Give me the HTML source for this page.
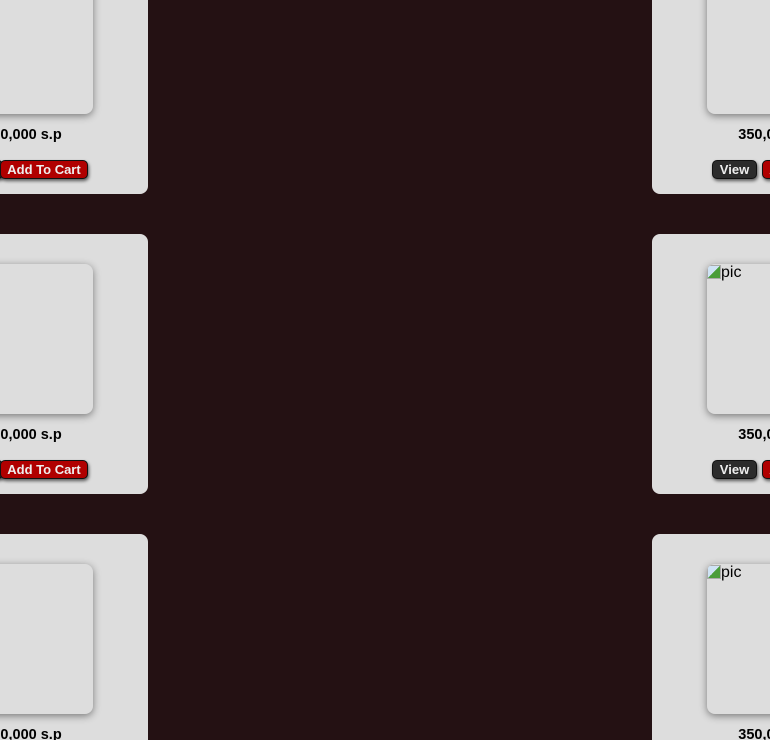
<!DOCTYPE html>
<html><head><style>
html,body{margin:0;padding:0;width:770px;height:740px;overflow:hidden;background:#241113;font-family:"Liberation Sans",Arial,sans-serif;}
#wrap{position:relative;width:770px;height:740px;overflow:hidden;}
.card{position:absolute;width:250px;height:260px;background:#dddddd;border-radius:8px;}
.img{position:absolute;left:55px;top:30px;width:140px;height:150px;border-radius:8px;background:#dddddd;box-shadow:0 2px 8px rgba(0,0,0,.45);font-size:16px;color:#000;overflow:hidden;}
.price{position:absolute;left:0;width:250px;top:193px;text-align:center;font-weight:bold;font-size:14.5px;color:#000;}
.btn{position:absolute;top:226px;height:19px;line-height:17px;border-radius:5px;font-weight:bold;font-size:13px;color:#eee;text-align:center;box-shadow:1px 2px 3px rgba(0,0,0,.6);border:1px solid #111;box-sizing:border-box;}
.view{left:60px;width:45px;background:#2b2b2b;}
.add{left:102px;width:88px;background:#b00000;}
.r .add{left:110px;}
.ico{display:inline-block;width:14px;height:14px;vertical-align:-2px;background:linear-gradient(135deg,#cfe3f5 50%,#4a9d3a 50%);border:1px solid #aaa;box-sizing:border-box;}
</style></head><body><div id="wrap">
<div class="card" style="left:-102px;top:-66px"><div class="img"></div><div class="price">350,000 s.p</div><div class="btn view">View</div><div class="btn add">Add To Cart</div></div>
<div class="card" style="left:-102px;top:234px"><div class="img"></div><div class="price">350,000 s.p</div><div class="btn view">View</div><div class="btn add">Add To Cart</div></div>
<div class="card" style="left:-102px;top:534px"><div class="img"></div><div class="price">350,000 s.p</div><div class="btn view">View</div><div class="btn add">Add To Cart</div></div>
<div class="card r" style="left:652px;top:-66px"><div class="img"></div><div class="price">350,000 s.p</div><div class="btn view">View</div><div class="btn add">Add To Cart</div></div>
<div class="card r" style="left:652px;top:234px"><div class="img"><span class="ico"></span>pic</div><div class="price">350,000 s.p</div><div class="btn view">View</div><div class="btn add">Add To Cart</div></div>
<div class="card r" style="left:652px;top:534px"><div class="img"><span class="ico"></span>pic</div><div class="price">350,000 s.p</div><div class="btn view">View</div><div class="btn add">Add To Cart</div></div>
</div></body></html>
